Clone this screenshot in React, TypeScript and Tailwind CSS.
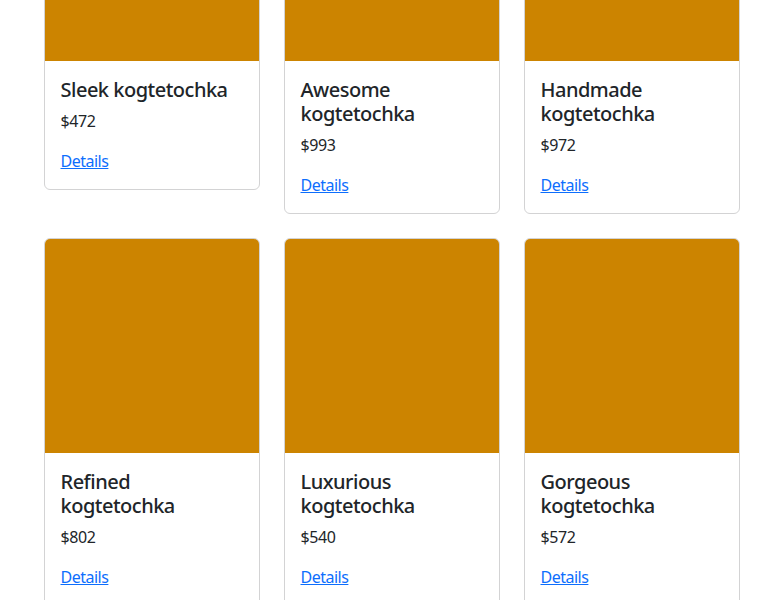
import React from "react";

type Item = { lines: string[]; price: number };

const rows: Item[][] = [
  [
    { lines: ["Sleek kogtetochka"], price: 472 },
    { lines: ["Awesome", "kogtetochka"], price: 993 },
    { lines: ["Handmade", "kogtetochka"], price: 972 },
  ],
  [
    { lines: ["Refined", "kogtetochka"], price: 802 },
    { lines: ["Luxurious", "kogtetochka"], price: 540 },
    { lines: ["Gorgeous", "kogtetochka"], price: 572 },
  ],
];

function Card({ item }: { item: Item }) {
  return (
    <div className="flex flex-col rounded-[6px] border border-[#d3d3d4] bg-white overflow-hidden">
      <div className="h-[214px] bg-[#cc8400]" />
      <div className="p-4">
        <h5 className="mt-[1px] mb-[7px] text-[20px] font-medium leading-[24px] tracking-[-0.5px] text-[#212529]">
          {item.lines.map((l, i) => (
            <span key={i} className="block whitespace-nowrap">
              {l}
            </span>
          ))}
        </h5>
        <p className="mb-4 text-[16px] leading-[24px] tracking-[-0.4px] text-[#212529]">${item.price}</p>
        <a href="#" className="text-[16px] leading-[24px] tracking-[-0.5px] text-[#0d6efd] underline">
          Details
        </a>
      </div>
    </div>
  );
}

export default function App() {
  return (
    <div
      className="min-h-[600px] bg-white overflow-hidden"
      style={{ fontFamily: '"Noto Sans", "Open Sans", sans-serif' }}
    >
      <div className="mx-auto -mt-[154px] w-[720px] px-3">
        <div className="flex flex-col gap-6">
          {rows.map((row, r) => (
            <div key={r} className="grid grid-cols-3 items-start gap-6">
              {row.map((item, i) => (
                <Card key={i} item={item} />
              ))}
            </div>
          ))}
        </div>
      </div>
    </div>
  );
}
